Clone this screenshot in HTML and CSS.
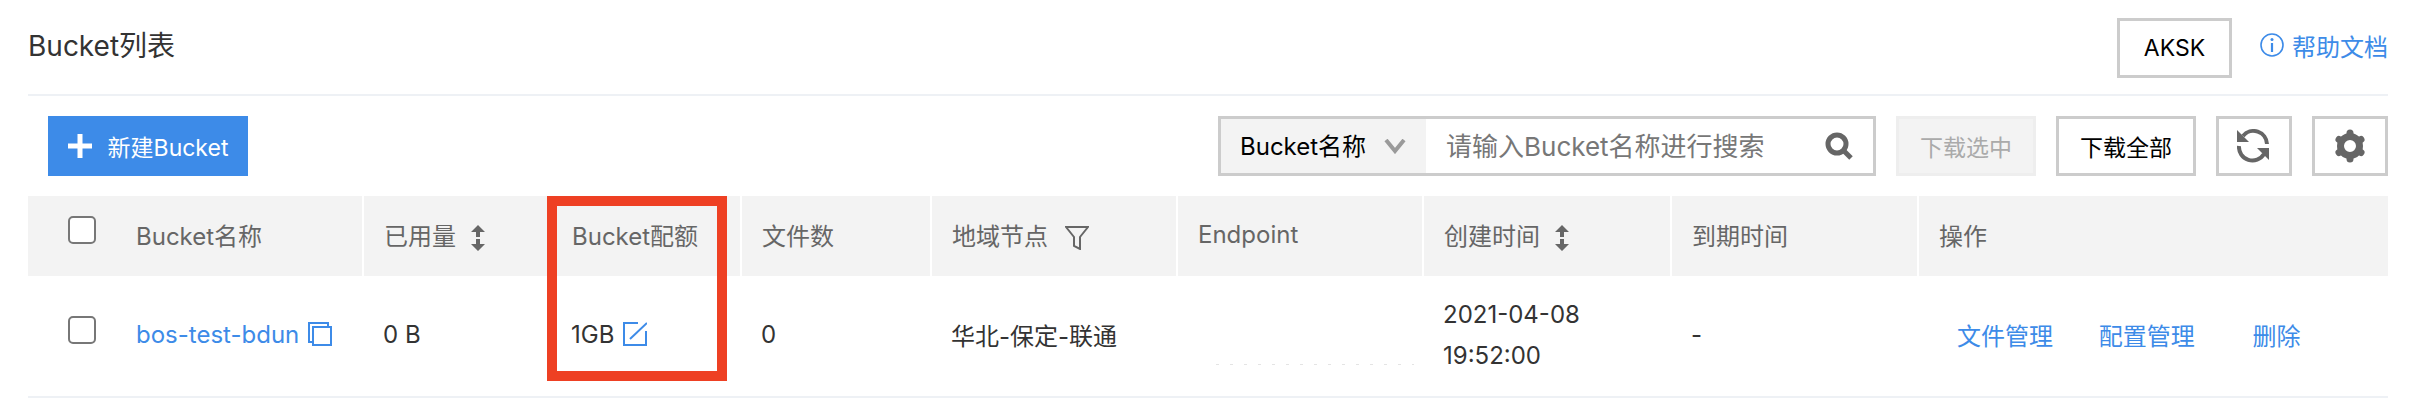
FILE: index.html
```html
<!DOCTYPE html>
<html lang="zh-CN">
  <head>
    <meta charset="UTF-8" />
    <meta name="viewport" content="width=device-width, initial-scale=1.0" />
    <title>Bucket列表</title>
    <link rel="stylesheet" href="styles.css">
  </head>
  <body>
    <div class="page">
      <header class="title-bar">
        <h1>Bucket列表</h1>
        <button class="btn aksk">AKSK</button>
        <a class="help" href="#">
          <svg class="help-icon" viewBox="0 0 24 24"><circle cx="12" cy="12" r="11" fill="none" stroke="currentColor" stroke-width="1.6"/><path d="M12 10v9" stroke="currentColor" stroke-width="2.2"/><circle cx="12" cy="6.5" r="1.5" fill="currentColor"/></svg>
          帮助文档
        </a>
      </header>

      <div class="toolbar">
        <button class="btn primary">
          <svg class="plus" viewBox="0 0 24 24"><path d="M12 0v24M0 12h24" stroke="#fff" stroke-width="5"/></svg>
          新建Bucket
        </button>
        <div class="tools">
          <div class="search">
            <div class="search-type">
              <span class="lift">Bucket名称</span>
              <svg class="caret" viewBox="0 0 22 15"><path d="M2 1l9 11 9-11" fill="none" stroke="#9a9a9a" stroke-width="4"/></svg>
            </div>
            <div class="search-input">
              <span class="lift">请输入Bucket名称进行搜索</span>
              <svg class="search-icon" viewBox="0 0 28 28"><circle cx="12" cy="12" r="9" fill="none" stroke="#666" stroke-width="5"/><path d="M18 18l8 8" stroke="#666" stroke-width="5"/></svg>
            </div>
          </div>
          <button class="btn disabled">下载选中</button>
          <button class="btn all">下载全部</button>
          <button class="btn square">
            <svg viewBox="0 0 34 34" class="tool-icon"><path d="M6 7A13.5 13.5 0 0 1 30 15" fill="none" stroke="#666" stroke-width="4"/><path d="M0 1v12h12z" fill="#666"/><path d="M2 17A13.5 13.5 0 0 0 27 25" fill="none" stroke="#666" stroke-width="4"/><path d="M32 19v12L20 19z" fill="#666"/></svg>
          </button>
          <button class="btn square">
            <svg viewBox="0 0 32 34" class="tool-icon"><circle cx="16" cy="17" r="9.5" fill="none" stroke="#666" stroke-width="7"/><path d="M16 4v1M16 29v1M27 10.500l-1 .6M5 23.500l1-.6M27 23.500l-1-.6M5 10.500l1 .6" stroke="#666" stroke-width="7" stroke-linecap="round"/></svg>
          </button>
        </div>
      </div>

      <div class="table-wrap">
        <table>
          <thead>
            <tr>
              <th class="col-check"><span class="checkbox"></span></th>
              <th class="col-name">Bucket名称</th>
              <th class="col-used">已用量 <svg class="sort" viewBox="0 0 14 26"><path d="M7 5v7M7 14v7" stroke="#666" stroke-width="4"/><path d="M0 7l7-7 7 7zM0 19l7 7 7-7z" fill="#666"/></svg></th>
              <th class="col-quota">Bucket配额</th>
              <th class="col-files">文件数</th>
              <th class="col-region">地域节点 <svg class="filter" viewBox="0 0 24 24"><path d="M1 1h22l-8 10v12l-6-3v-9z" fill="none" stroke="#666" stroke-width="2"/></svg></th>
              <th class="col-endpoint">Endpoint</th>
              <th class="col-created">创建时间 <svg class="sort" viewBox="0 0 14 26"><path d="M7 5v7M7 14v7" stroke="#666" stroke-width="4"/><path d="M0 7l7-7 7 7zM0 19l7 7 7-7z" fill="#666"/></svg></th>
              <th class="col-expire">到期时间</th>
              <th class="col-ops">操作</th>
            </tr>
          </thead>
          <tbody>
            <tr>
              <td class="col-check"><span class="checkbox"></span></td>
              <td class="col-name"><a href="#">bos-test-bdun</a> <svg class="copy" viewBox="0 0 24 24"><path d="M5 5h18v18H5z" fill="none" stroke="#3d8be8" stroke-width="2"/><path d="M5 20H1V1h19v4" fill="none" stroke="#3d8be8" stroke-width="2"/></svg></td>
              <td>0 B</td>
              <td>1GB <svg class="edit" viewBox="0 0 24 24"><path d="M15 1H1v22h22V9" fill="none" stroke="#3d8be8" stroke-width="2"/><path d="M7 17L24 1" stroke="#3d8be8" stroke-width="2"/></svg></td>
              <td>0</td>
              <td>华北-保定-联通</td>
              <td class="endpoint"><div class="masked"></div></td>
              <td class="date">2021-04-08<br />19:52:00</td>
              <td>-</td>
              <td class="ops">
                <a href="#">文件管理</a>
                <a href="#">配置管理</a>
                <a class="del" href="#">删除</a>
              </td>
            </tr>
          </tbody>
        </table>
        <div class="highlight"></div>
      </div>
    </div>
  </body>
</html>
```

FILE: styles.css
```css
body {
  margin: 0;
  background-color: #fff;
  font-family: "Inter", "Noto Sans CJK SC", sans-serif;
  font-size: 24px;
  color: #333;
}

.page {
  padding: 0 28px;
}

a {
  color: #3d8be8;
  text-decoration: none;
}

/* title row */
.title-bar {
  display: flex;
  align-items: center;
  height: 94px;
  border-bottom: 2px solid #eef1f5;
}

.title-bar h1 {
  flex: 1;
  margin: -2px 0 0;
  font-size: 28px;
  font-weight: 400;
  color: #333;
  line-height: 1;
}

.btn {
  box-sizing: border-box;
  height: 60px;
  padding: 0;
  border: 3px solid #ccc;
  background: #fff;
  color: #000;
  font: inherit;
  font-size: 23px;
}

.aksk {
  width: 115px;
  margin-top: 2px;
}

.help {
  display: flex;
  align-items: center;
  gap: 8px;
  margin-left: 28px;
  margin-top: -4px;
}

.help-icon {
  width: 24px;
  height: 24px;
}

/* toolbar */
.toolbar {
  display: flex;
  justify-content: space-between;
  margin: 20px 0;
  padding-left: 20px;
}

.primary {
  display: flex;
  align-items: center;
  justify-content: center;
  gap: 16px;
  width: 200px;
  border: none;
  background-color: #3d8be8;
  color: #fff;
}

.plus {
  width: 24px;
  height: 24px;
}

.tools {
  display: flex;
  gap: 20px;
}

.search {
  box-sizing: border-box;
  display: flex;
  width: 658px;
  height: 60px;
  border: 3px solid #ccc;
}

.search-type {
  display: flex;
  align-items: center;
  gap: 18px;
  width: 205px;
  padding-left: 19px;
  box-sizing: border-box;
  background-color: #f3f3f3;
  color: #000;
}

.lift {
  margin-top: -3px;
}

.caret {
  width: 22px;
  height: 15px;
}

.search-input {
  flex: 1;
  display: flex;
  align-items: center;
  justify-content: space-between;
  padding: 0 20px;
  color: #777;
  font-size: 26px;
}

.search-icon {
  width: 28px;
  height: 28px;
}

.disabled {
  width: 140px;
  border-color: #eee;
  background-color: #f3f3f3;
  color: #aaa;
}

.all {
  width: 140px;
}

.square {
  display: flex;
  align-items: center;
  justify-content: center;
  width: 76px;
}

.tool-icon {
  width: 34px;
  height: 34px;
}

/* table */
.table-wrap {
  position: relative;
}

table {
  width: 100%;
  border-collapse: separate;
  border-spacing: 0;
  table-layout: fixed;
}

th {
  height: 80px;
  padding: 0 0 4px 20px;
  box-sizing: border-box;
  border-right: 2px solid #fff;
  background-color: #f3f3f3;
  color: #666;
  font-weight: 400;
  text-align: left;
}

td {
  height: 122px;
  padding: 0 0 4px 19px;
  box-sizing: border-box;
  border-bottom: 2px solid #eef1f5;
}

th:last-child {
  border-right: none;
}

th.col-check,
td.col-check {
  width: 108px;
  padding: 0 0 0 40px;
  border-right: none;
}

th.col-name,
td.col-name {
  width: 228px;
  padding-left: 0;
}

.col-used { width: 188px; }
.col-quota { width: 190px; }
.col-files { width: 190px; }
.col-region { width: 246px; }
.col-endpoint { width: 246px; }
.col-created { width: 248px; }
.col-expire { width: 247px; }

.checkbox {
  display: block;
  box-sizing: border-box;
  width: 28px;
  height: 28px;
  margin-top: -12px;
  border: 2px solid #777;
  border-radius: 5px;
  background: #fff;
}

.sort {
  width: 14px;
  height: 26px;
  margin-left: 8px;
  vertical-align: middle;
}

.filter {
  width: 24px;
  height: 24px;
  margin-left: 10px;
  vertical-align: middle;
}

.copy,
.edit {
  width: 24px;
  height: 24px;
  margin-left: 2px;
  vertical-align: -3px;
}

/* faint specks left from the masked endpoint text */
td.endpoint {
  vertical-align: top;
  padding-top: 88px;
}

.masked {
  height: 1px;
  margin-left: 19px;
  width: 198px;
  background-image: repeating-linear-gradient(90deg, #e4e4e4 0 3px, transparent 3px 14px);
}

td.date {
  padding-bottom: 2px;
  line-height: 41px;
}

td.ops {
  padding-left: 38px;
}

.ops a {
  margin-right: 39px;
}

.ops .del {
  margin-left: 12px;
  margin-right: 0;
}

/* red annotation box */
.highlight {
  position: absolute;
  left: 519px;
  top: 0;
  width: 180px;
  height: 185px;
  box-sizing: border-box;
  border: 10px solid #ee4023;
}
```
